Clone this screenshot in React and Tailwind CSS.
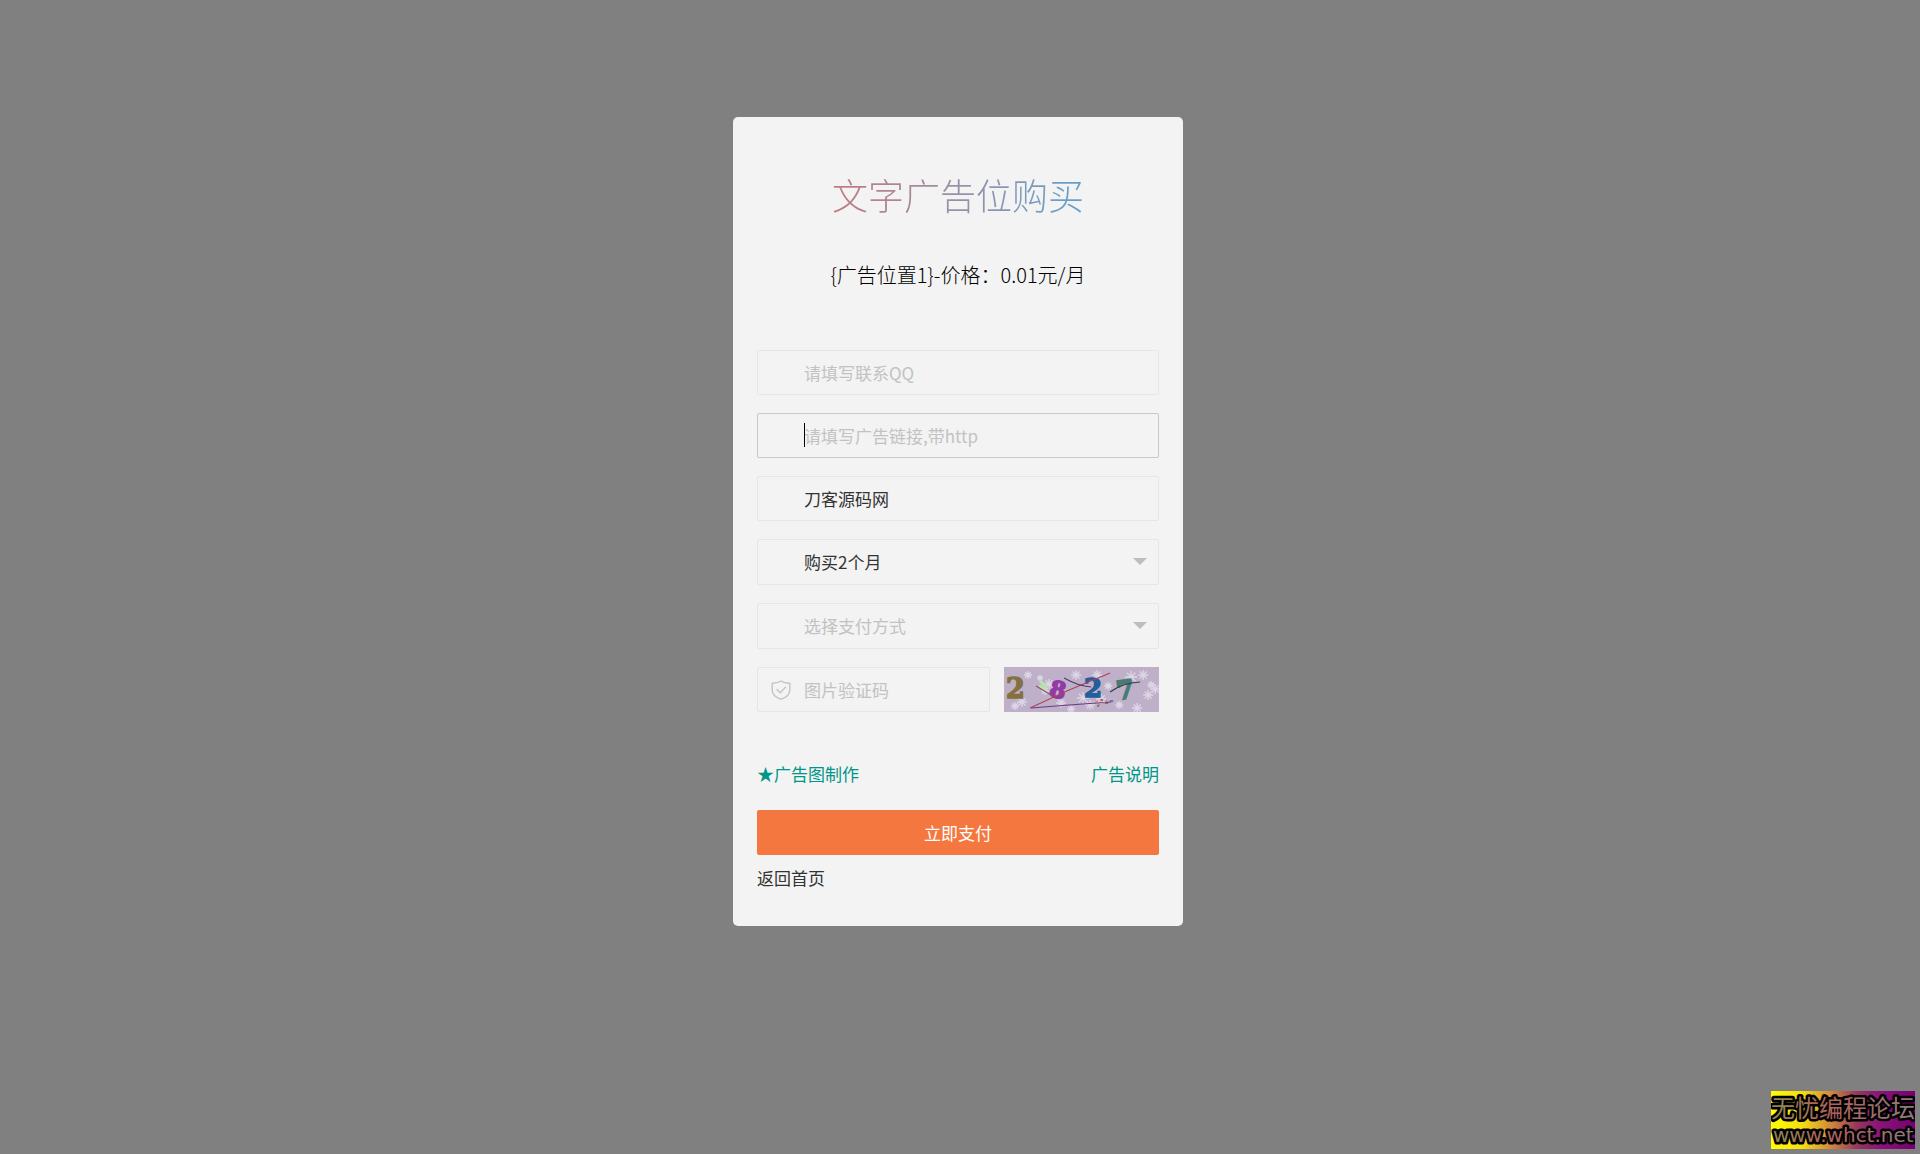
import React, { useState } from 'react';

const fieldClass =
  'block w-full h-[45px] rounded-xs border border-[#e6e6e6] bg-transparent pl-[46px] pr-3 text-[17px] text-[#333] placeholder:text-[#c2c2c2] outline-none';

const App = () => {
  const [form, setForm] = useState({
    qq: '',
    url: '',
    title: '刀客源码网',
    month: '2',
    pay: '',
    code: '',
  });

  const update = (e) => setForm({ ...form, [e.target.name]: e.target.value });

  return (
    <div
      className="min-h-screen bg-[#808080] pt-[117px] pb-16 pr-1 font-['Noto_Sans_CJK_SC',sans-serif]"
    >
      <main className="mx-auto w-full max-w-[450px] rounded-[5px] bg-[#f3f3f3]">
        <header className="px-6 pt-[51px] text-center">
          <h1 className="inline-block bg-linear-to-r from-[#c07a80] to-[#5f9fcc] bg-clip-text text-[36px] leading-[52px] font-light text-transparent">
            文字广告位购买
          </h1>
          <p className="mt-10 text-[20px] leading-[30px] font-light text-black">
            {'{广告位置1}-价格：0.01元/月'}
          </p>
        </header>

        <form className="px-6 pt-[60px] pb-9" onSubmit={(e) => e.preventDefault()}>
          <div className="flex flex-col gap-[18px]">
            <input name="qq" aria-label="联系QQ" placeholder="请填写联系QQ" className={fieldClass} value={form.qq} onChange={update} />
            <UrlField value={form.url} onChange={update} />
            <input name="title" aria-label="广告标题" className={fieldClass} value={form.title} onChange={update} />
            <SelectField name="month" label="购买时长" value={form.month} onChange={update}>
              <option value="1">购买1个月</option>
              <option value="2">购买2个月</option>
              <option value="3">购买3个月</option>
            </SelectField>
            <SelectField name="pay" label="支付方式" value={form.pay} onChange={update}>
              <option value="">选择支付方式</option>
              <option value="alipay">支付宝</option>
              <option value="wxpay">微信支付</option>
            </SelectField>
            <div className="flex gap-[14px]">
              <div className="relative flex-3">
                <ShieldIcon />
                <input name="code" aria-label="图片验证码" placeholder="图片验证码" className={fieldClass} value={form.code} onChange={update} />
              </div>
              <button type="button" aria-label="刷新验证码" className="h-[45px] flex-2 cursor-pointer overflow-hidden">
                <Captcha />
              </button>
            </div>
          </div>

          <div className="mt-[50px] flex justify-between text-[17px] leading-6 text-[#009688]">
            <a href="#make">★广告图制作</a>
            <a href="#about">广告说明</a>
          </div>
          <button type="submit" className="mt-6 block h-[45px] w-full cursor-pointer rounded-xs bg-[#f4773f] text-[17px] text-white">
            立即支付
          </button>
          <a href="#home" className="mt-[11px] inline-block text-[17px] leading-6 text-[#333]">
            返回首页
          </a>
        </form>
      </main>
      <Watermark />
    </div>
  );
};

// Active field, with its own text cursor
const UrlField = ({ value, onChange }) => (
  <div className="relative">
    <input
      name="url"
      aria-label="广告链接"
      placeholder="请填写广告链接,带http"
      className="block w-full h-[45px] rounded-xs border border-[#c9c9c9] bg-transparent pl-[46px] pr-3 text-[17px] text-[#333] placeholder:text-[#c2c2c2] outline-none caret-transparent"
      value={value}
      onChange={onChange}
    />
    <span className="absolute left-[47px] top-[10px] h-6 w-px bg-black" />
  </div>
);

const SelectField = ({ name, label, value, onChange, children }) => (
  <div className="relative">
    <select
      name={name}
      aria-label={label}
      value={value}
      onChange={onChange}
      className={
        value
          ? 'block w-full h-[46px] appearance-none rounded-xs border border-[#e6e6e6] bg-transparent pl-[46px] pr-8 text-[17px] text-[#333] outline-none'
          : 'block w-full h-[46px] appearance-none rounded-xs border border-[#e6e6e6] bg-transparent pl-[46px] pr-8 text-[17px] text-[#c2c2c2] outline-none'
      }
    >
      {children}
    </select>
    <svg className="pointer-events-none absolute right-3 top-[19px] h-[7px] w-[14px]" viewBox="0 0 14 7" fill="#bdbdbd">
      <path d="M0 0h14L7 7z" />
    </svg>
  </div>
);

const ShieldIcon = () => (
  <svg className="pointer-events-none absolute left-[14px] top-[13px] h-5 w-5" viewBox="0 0 20 20" fill="none" stroke="#c6c6c6" strokeWidth="1.5" strokeLinecap="round" strokeLinejoin="round">
    <path d="M10 1C7.8 2.6 4.6 3.3 1.2 3.3V10c0 4.6 4 7.6 8.8 9.2 4.8-1.6 8.8-4.6 8.8-9.2V3.3C15.4 3.3 12.2 2.6 10 1z" />
    <path d="M6 9.5l3.2 3.3 5.3-5.6" />
  </svg>
);

// x, y, radius
const flakes = [
  [24, 8, 4], [45, 17, 5], [11, 39, 4], [18, 35, 5], [41, 24, 4], [72, 8, 5], [93, 8, 5],
  [127, 10, 6], [139, 8, 5], [147, 18, 4], [144, 28, 5], [57, 36, 5], [79, 31, 6], [97, 32, 5],
  [133, 41, 5], [67, 42, 4], [36, 11, 3], [86, 38, 5], [115, 38, 4], [151, 22, 5], [104, 19, 4],
];

const Captcha = () => (
  <svg className="block h-full w-full" viewBox="0 0 155 45" preserveAspectRatio="none">
    <rect width="155" height="45" fill="#bfb0c9" />
    <g stroke="#ddd6e6" strokeWidth="1.3" fill="none">
      {flakes.map(([x, y, r]) => (
        <path key={`${x}-${y}`} d={`M${x - r} ${y}h${r * 2}M${x} ${y - r}v${r * 2}M${x - r * 0.7} ${y - r * 0.7}l${r * 1.4} ${r * 1.4}M${x - r * 0.7} ${y + r * 0.7}l${r * 1.4} ${-r * 1.4}`} />
      ))}
    </g>
    <path d="M36 18q2 5 7 3M36 14l7 7" stroke="#b9e2b0" strokeWidth="3" fill="none" />
    <g fontFamily="DejaVu Serif" fontWeight="bold" strokeWidth="1.5">
      <text x="2" y="31" fontSize="27" fill="#84713f" stroke="#84713f">2</text>
      <text x="46" y="31" fontSize="23" fill="#923aa8" stroke="#923aa8" transform="rotate(12 55 23)">8</text>
      <text x="80" y="30" fontSize="26" fill="#245e9c" stroke="#245e9c">2</text>
      <text x="112" y="32" fontSize="26" fill="#477b74" stroke="#477b74" transform="rotate(-8 120 22)">7</text>
    </g>
    <g fill="none" strokeWidth="1">
      <path d="M26 41L65 23 106 6" stroke="#ad4254" />
      <path d="M27 41q36-3 80-6" stroke="#6b3988" />
      <path d="M32 19l20 12" stroke="#8d4c5c" />
      <path d="M60 11q14 8 27 9" stroke="#4e386b" />
      <path d="M106 25q12-9 30-10" stroke="#303f42" />
    </g>
    <g fill="#da8056">
      <path d="M92 34h2v2h-2zM96 32h2v2h-2zM99 35h2v2h-2zM94 37h2v1h-2zM102 33h1v2h-1z" />
    </g>
    <path d="M93 39h2M97 33h2M101 36h3M106 34h3" stroke="#333a68" />
  </svg>
);

const Watermark = () => (
  <a href="#forum" aria-label="无忧编程论坛 www.whct.net" className="fixed right-[5px] bottom-[5px] h-[58px] w-[144px]">
    <svg className="block h-full w-full" viewBox="0 0 144 58">
      <defs>
        <linearGradient id="markBg" x1="0" y1="0" x2="1" y2="0">
          <stop offset="0" stopColor="#ffff00" />
          <stop offset="0.22" stopColor="#f4dc12" />
          <stop offset="0.42" stopColor="#d0853c" />
          <stop offset="0.6" stopColor="#94365c" />
          <stop offset="0.75" stopColor="#8a1478" />
          <stop offset="1" stopColor="#760070" />
        </linearGradient>
        <linearGradient id="markText" gradientUnits="userSpaceOnUse" x1="0" y1="0" x2="144" y2="0">
          <stop offset="0" stopColor="#8c8c50" />
          <stop offset="0.4" stopColor="#b06058" />
          <stop offset="1" stopColor="#8f7a80" />
        </linearGradient>
      </defs>
      <rect width="144" height="58" fill="url(#markBg)" />
      <g fill="url(#markText)" stroke="#000" strokeLinejoin="round" paintOrder="stroke">
        <text x="0" y="26" fontSize="24" strokeWidth="5" fontFamily="Noto Sans CJK SC">无忧编程论坛</text>
        <text x="2" y="51" fontSize="20" strokeWidth="5" fontFamily="DejaVu Sans">www.whct.net</text>
      </g>
    </svg>
  </a>
);

export default App;
